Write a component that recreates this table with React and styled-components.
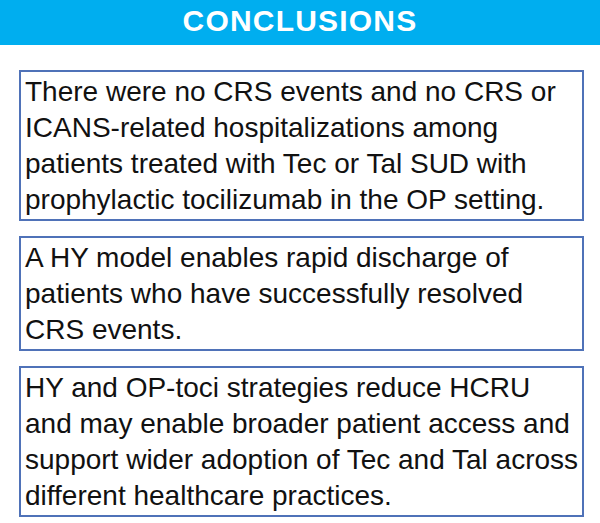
import styled, { createGlobalStyle } from "styled-components";

const GlobalStyle = createGlobalStyle`
  html, body {
    margin: 0;
    padding: 0;
    background: #ffffff;
  }
`;

const Page = styled.div`
  width: 600px;
  height: 523px;
  background: #ffffff;
  font-family: "Liberation Sans", Arial, sans-serif;
  overflow: hidden;
`;

const Banner = styled.header`
  height: 45px;
  background: #00aeef;
  color: #ffffff;
  display: flex;
  justify-content: center;
  align-items: flex-start;
`;

const Title = styled.h1`
  margin: 0;
  font-size: 30px;
  line-height: 41px;
  font-weight: 700;
  letter-spacing: 1.2px;
`;

const List = styled.div`
  display: flex;
  flex-direction: column;
  gap: 15px;
  padding: 25px 16px 0 19px;
`;

const Box = styled.div`
  border: 2px solid #4f72b8;
  padding: 2px 1px 1px 4px;
  font-size: 28px;
  line-height: 36px;
  color: #111111;
`;

const points = [
  "There were no CRS events and no CRS or ICANS-related hospitalizations among patients treated with Tec or Tal SUD with prophylactic tocilizumab in the OP setting.",
  "A HY model enables rapid discharge of patients who have successfully resolved CRS events.",
  "HY and OP-toci strategies reduce HCRU and may enable broader patient access and support wider adoption of Tec and Tal across different healthcare practices.",
];

export default function App() {
  return (
    <Page>
      <GlobalStyle />
      <Banner>
        <Title>CONCLUSIONS</Title>
      </Banner>
      <List>
        {points.map((text) => (
          <Box key={text}>{text}</Box>
        ))}
      </List>
    </Page>
  );
}
